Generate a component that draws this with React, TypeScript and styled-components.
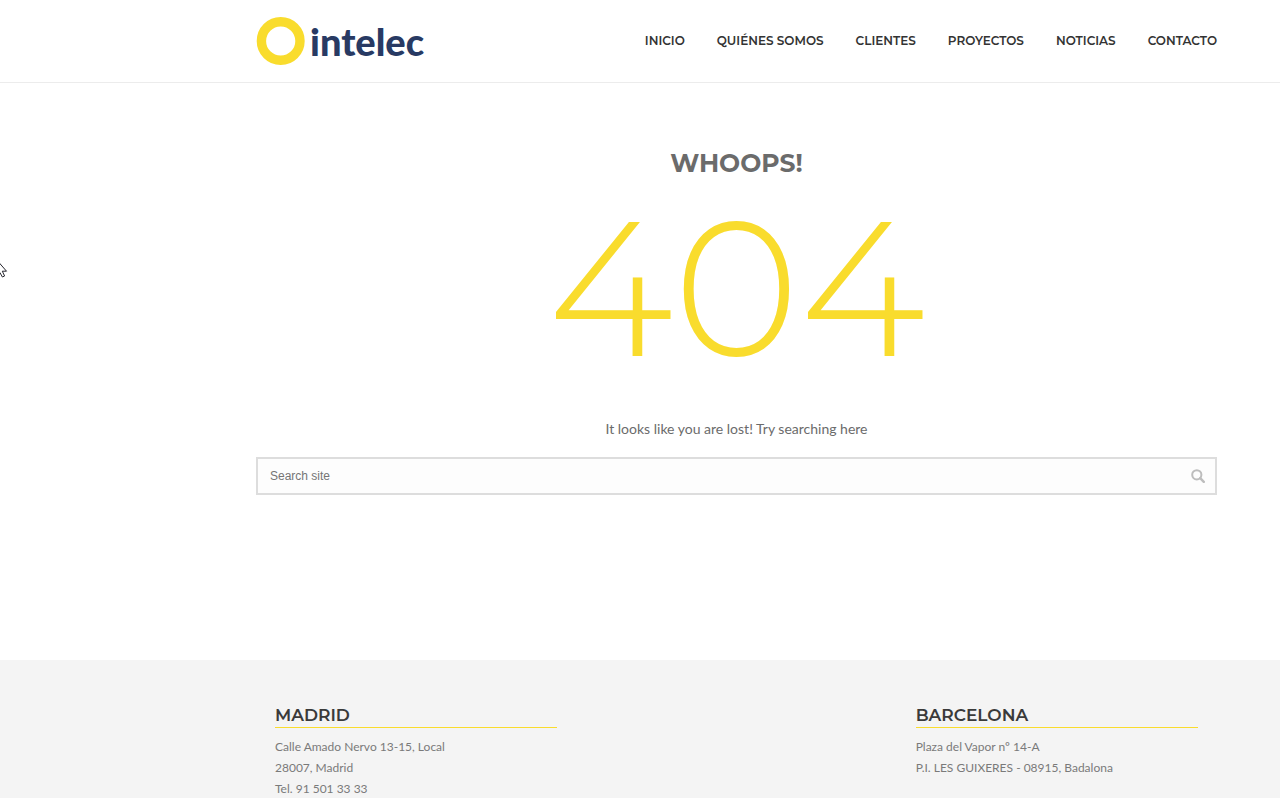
import React from "react";
import styled, { createGlobalStyle } from "styled-components";

const yellow = "#f9dc2d";
const display = `Montserrat, Inter, "Liberation Sans", sans-serif`;
const body = `Lato, "Liberation Sans", sans-serif`;

const GlobalStyle = createGlobalStyle`
  *, *::before, *::after { box-sizing: border-box; }
  html { overflow: hidden auto; scrollbar-width: none; }
  body { margin: 0; background: #fff; font-family: ${body}; }
  h1, h2, p { margin: 0; }
`;

const Page = styled.div`
  display: flex;
  flex-direction: column;
  min-height: 100vh;
`;

const Header = styled.header`
  display: flex;
  align-items: center;
  justify-content: space-between;
  min-height: 83px;
  padding: 0 63px 0 20%;
  border-bottom: 1px solid #ececec;
`;

const Logo = styled.a`
  display: flex;
  align-items: center;
  gap: 5px;
  color: #283a63;
  font: 900 38px/48px ${body};
  text-decoration: none;
`;

const Nav = styled.nav`
  display: flex;
  gap: 32px;
`;

const NavLink = styled.a`
  color: #333333;
  font: 600 12px/20px ${display};
  text-decoration: none;
  white-space: nowrap;
`;

const Main = styled.main`
  display: flex;
  flex-direction: column;
  align-items: center;
  padding: 64px 63px 165px 20%;
`;

const Whoops = styled.h1`
  color: #6b6b6b;
  font: 700 25px/32px ${display};
`;

const Code = styled.p`
  margin-top: 10px;
  color: ${yellow};
  font: 300 192px/196px ${display};
`;

const Hint = styled.p`
  margin-top: 32px;
  color: #6b6b6b;
  font: 400 14px/24px ${body};
`;

const SearchForm = styled.form`
  display: flex;
  align-items: center;
  width: 100%;
  height: 38px;
  margin-top: 16px;
  border: 2px solid #dddddd;
  background: #fdfdfd;
`;

const SearchInput = styled.input`
  flex: 1;
  min-width: 0;
  height: 100%;
  padding: 0 12px;
  border: 0;
  outline: 0;
  background: transparent;
  color: #6f6f6f;
  font: 400 12px/16px "Liberation Sans", Arial, sans-serif;
  &::placeholder { color: #757575; opacity: 1; }
`;

const SearchButton = styled.button`
  display: flex;
  align-items: center;
  justify-content: center;
  width: 34px;
  height: 100%;
  padding: 0;
  border: 0;
  background: transparent;
`;

const Footer = styled.footer`
  display: grid;
  flex: 1;
  grid-template-columns: repeat(3, 1fr);
  padding: 44px 63px 0 20%;
  background: #f4f4f4;
`;

const Office = styled.section<{ $column: number }>`
  grid-column: ${(p) => p.$column};
  padding: 0 19px;
`;

const City = styled.h2`
  margin-bottom: 8px;
  border-bottom: 1px solid ${yellow};
  color: #3a3a3a;
  font: 600 17px/23px ${display};
`;

const AddressLine = styled.p`
  color: #7a7a7a;
  font: 400 12px/21px ${body};
  white-space: nowrap;
`;

const Cursor = styled.svg`
  position: absolute;
  top: 261px;
  left: 0;
`;

const links = ["Inicio", "Quiénes somos", "Clientes", "Proyectos", "Noticias", "Contacto"];

const offices = [
  { city: "MADRID", column: 1, lines: ["Calle Amado Nervo 13-15, Local", "28007, Madrid", "Tel. 91 501 33 33"] },
  { city: "BARCELONA", column: 3, lines: ["Plaza del Vapor nº 14-A", "P.I. LES GUIXERES - 08915, Badalona"] },
];

export default function App() {
  return (
    <Page>
      <GlobalStyle />
      <Header>
        <Logo href="#">
          <svg width="49" height="50" viewBox="0 0 49 50" aria-hidden="true">
            <circle cx="24.7" cy="25" r="19.3" fill="none" stroke={yellow} strokeWidth="9.4" />
          </svg>
          intelec
        </Logo>
        <Nav>
          {links.map((l) => (
            <NavLink href="#" key={l}>{l.toUpperCase()}</NavLink>
          ))}
        </Nav>
      </Header>
      <Main>
        <Whoops>WHOOPS!</Whoops>
        <Code>404</Code>
        <Hint>It looks like you are lost! Try searching here</Hint>
        <SearchForm role="search" onSubmit={(e) => e.preventDefault()}>
          <SearchInput type="text" placeholder="Search site" aria-label="Search site" />
          <SearchButton type="submit" aria-label="Search">
            <svg width="14" height="14" viewBox="0 0 14 14" fill="none" stroke="#bdbdbd">
              <circle cx="5.8" cy="5.8" r="4.6" strokeWidth="2" />
              <path d="M9.2 9.2 12.8 12.8" strokeWidth="2.4" strokeLinecap="round" />
            </svg>
          </SearchButton>
        </SearchForm>
      </Main>
      <Footer>
        {offices.map((o) => (
          <Office $column={o.column} key={o.city}>
            <City>{o.city}</City>
            {o.lines.map((line) => (
              <AddressLine key={line}>{line}</AddressLine>
            ))}
          </Office>
        ))}
      </Footer>
      <Cursor width="8" height="18" viewBox="0 0 8 18" aria-hidden="true">
        <path d="M-5-3 6.5 10.2H2.3L4.6 15 2.4 16-.2 11.4-5 15Z" fill="#fff" stroke="#25252d" strokeWidth="1" />
      </Cursor>
    </Page>
  );
}
